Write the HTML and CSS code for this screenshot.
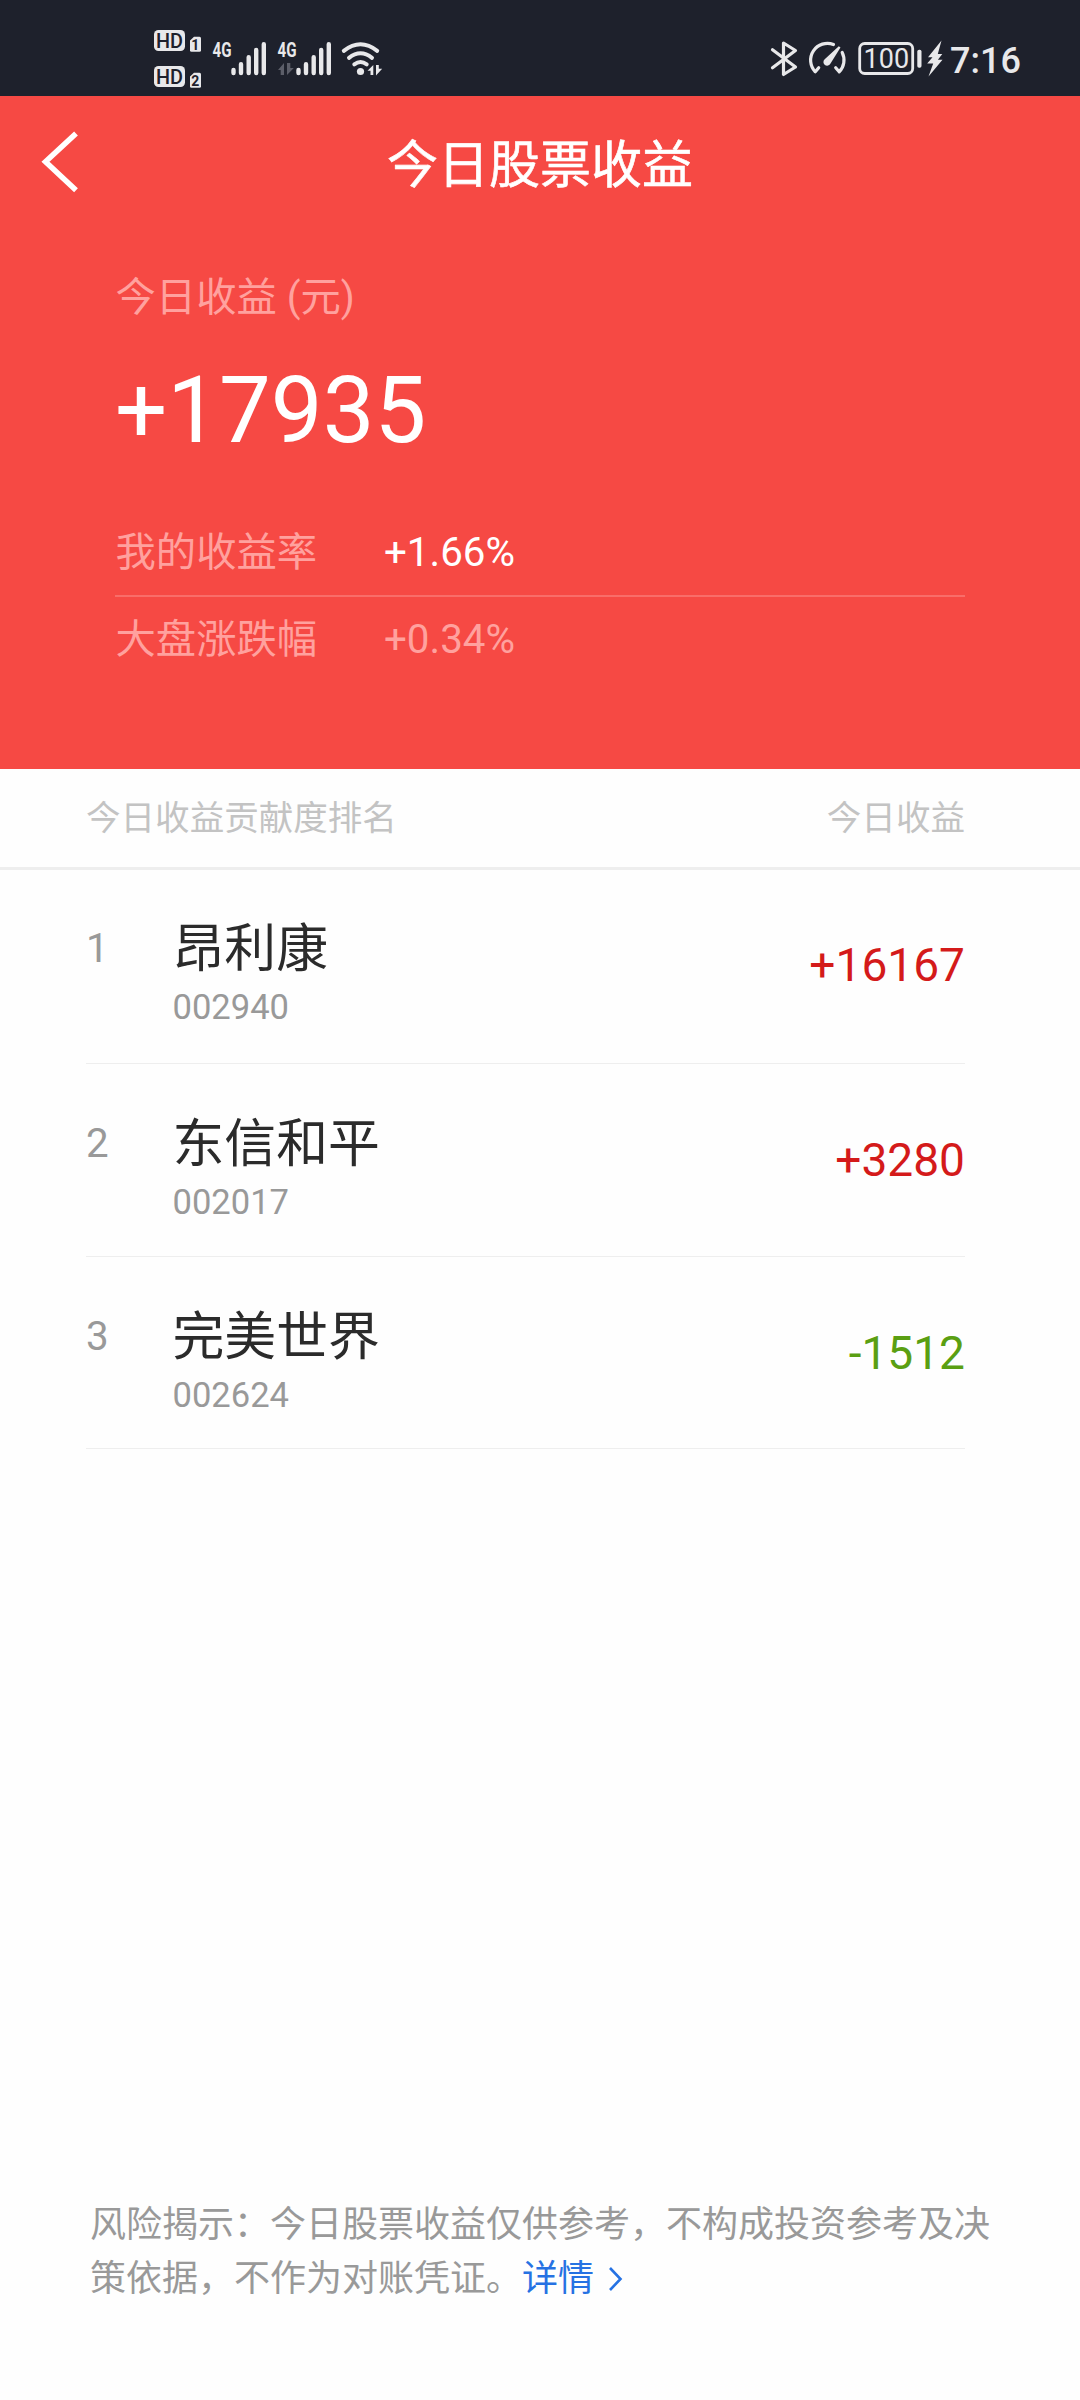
FILE: index.html
```html
<!DOCTYPE html>
<html lang="zh-CN">
<head>
<meta charset="utf-8">
<title>今日股票收益</title>
<link rel="stylesheet" href="styles.css">
</head>
<body>
<div class="screen">
  <header class="status">
    <div class="status-group">
      <svg class="icon" width="56" height="96" viewBox="150 0 56 96">
        <rect x="154" y="30" width="31" height="21" rx="4.5"/>
        <rect x="154" y="66" width="31" height="21" rx="4.5"/>
        <text class="hd" x="156" y="47.7" textLength="27" lengthAdjust="spacingAndGlyphs">HD</text>
        <text class="hd" x="156" y="83.7" textLength="27" lengthAdjust="spacingAndGlyphs">HD</text>
        <path d="M190 40.5l4-3.8h5.5q1.5 0 1.5 1.5v12q0 1.5-1.5 1.5h-8q-1.5 0-1.5-1.5z"/>
        <path d="M190 76.5l4-3.8h5.5q1.5 0 1.5 1.5v12q0 1.5-1.5 1.5h-8q-1.5 0-1.5-1.5z"/>
        <text class="sim" x="195.3" y="49.7">1</text>
        <text class="sim" x="195.3" y="85.7">2</text>
      </svg>
      <svg class="icon" width="65" height="96" viewBox="206 0 65 96">
        <text class="net" x="212.5" y="56.7" textLength="19" lengthAdjust="spacingAndGlyphs">4G</text>
        <path class="bars" d="M233.5 70v3M241 64.3v8.7M248.7 57.3V73M256.2 50V73M263.8 44.2V73"/>
      </svg>
      <svg class="icon" width="66" height="96" viewBox="271 0 66 96">
        <text class="net" x="277.5" y="56.7" textLength="19" lengthAdjust="spacingAndGlyphs">4G</text>
        <path class="bars" d="M298.5 70v3M306 64.3v8.7M313.7 57.3V73M321.2 50V73M328.8 44.2V73"/>
        <path class="muted" d="M278 70l6-7v12h-3.3v-5zM287 63h3.3v5h3.5L287 75z"/>
      </svg>
      <svg class="icon" width="50" height="96" viewBox="337 0 50 96">
        <path class="wave" d="M343.8 50.8Q360.5 37.8 377.2 50.8M349 57.8Q360.5 48.8 372 57.8M354.3 64.3Q360.5 59.8 366.7 64.3"/>
        <circle cx="360.5" cy="71.5" r="3.6"/>
        <path d="M367.5 70.8L373.3 65v10h-2.8v-4.2zM376 65h2.8v3.8h3.4L376 75.5z"/>
      </svg>
    </div>
    <div class="status-group">
      <svg class="icon" width="36" height="96" viewBox="767 0 36 96">
        <path class="line" d="M772.5 49.7L795.5 67 783.5 74.5V43L795.5 50.5 772.5 67.8"/>
      </svg>
      <svg class="icon" width="49" height="96" viewBox="803 0 49 96">
        <path class="line" d="M818.7 67.8L815.3 71.8A16.8 16.8 0 0 1 833.5 44.5M842.2 52.5A16.8 16.8 0 0 1 839.2 71.8L835.7 67.8"/>
        <path d="M838.8 46.2l1.7 1.2L830.5 63.5a3.7 3.7 0 1 1-5.8-4.3z"/>
      </svg>
      <svg class="icon" width="73" height="96" viewBox="852 0 73 96">
        <rect class="shell" x="859.7" y="43.5" width="53" height="30" rx="5"/>
        <rect x="917.3" y="49.8" width="4.2" height="18" rx="1.8"/>
        <text class="level" x="886.3" y="68.3">100</text>
      </svg>
      <svg class="icon" width="25" height="96" viewBox="925 0 25 96">
        <path d="M941.5 40.5L928 57.3h4.5L927.2 63.5h6L928.5 76.5 942.5 59.8h-4.6L942.3 54h-4.5z"/>
      </svg>
      <time class="clock">7:16</time>
    </div>
  </header>

  <section class="hero">
    <nav class="navbar">
      <svg class="back" width="44" height="64" viewBox="0 0 44 64"><path d="M38 3.5L7.5 31.8 38 60.2"/></svg>
      <h1 class="title">今日股票收益</h1>
    </nav>
    <div class="summary">
      <p class="caption">今日收益 (元)</p>
      <p class="total">+17935</p>
      <dl class="rates">
        <div class="rate rate-own"><dt>我的收益率</dt><dd>+1.66%</dd></div>
        <div class="rate"><dt>大盘涨跌幅</dt><dd>+0.34%</dd></div>
      </dl>
    </div>
  </section>

  <main class="ranking">
    <div class="list-head"><span>今日收益贡献度排名</span><span>今日收益</span></div>
    <ol class="list">
      <li class="row">
        <span class="rank">1</span>
        <div class="stock"><span class="name">昂利康</span><span class="code">002940</span></div>
        <span class="amount up">+16167</span>
      </li>
      <li class="row">
        <span class="rank">2</span>
        <div class="stock"><span class="name">东信和平</span><span class="code">002017</span></div>
        <span class="amount up">+3280</span>
      </li>
      <li class="row">
        <span class="rank">3</span>
        <div class="stock"><span class="name">完美世界</span><span class="code">002624</span></div>
        <span class="amount down">-1512</span>
      </li>
    </ol>
  </main>

  <footer class="notice">风险揭示：今日股票收益仅供参考，不构成投资参考及决策依据，不作为对账凭证。<a class="more">详情<svg class="more-icon" width="16" height="26" viewBox="0 0 16 26"><path d="M2 2l10.5 11L2 24"/></svg></a></footer>
</div>
</body>
</html>
```
FILE: styles.css
```css
* {
  box-sizing: border-box;
  margin: 0;
  padding: 0;
}

body {
  font-family: Roboto, "Noto Sans CJK SC", sans-serif;
  background: #fefefe;
}

.screen {
  display: flex;
  flex-direction: column;
  width: 1080px;
  height: 2400px;
}

/* Status bar */
.status {
  display: flex;
  justify-content: space-between;
  height: 96px;
  padding: 0 61px 0 150px;
  background: #1e212c;
  color: #e8e8ea;
}

.status-group {
  display: flex;
}

.icon {
  display: block;
  fill: #e8e8ea;
}

.hd {
  font-size: 20.5px;
  font-weight: 500;
  fill: #1e212c;
}

.sim {
  font-size: 14px;
  font-weight: 700;
  text-anchor: middle;
  fill: #1e212c;
}

.net {
  font-size: 19.5px;
  font-weight: 700;
}

.bars {
  fill: none;
  stroke: #e8e8ea;
  stroke-width: 4.4;
  stroke-linecap: round;
}

.muted {
  fill: #5c5e69;
}

.wave {
  fill: none;
  stroke: #e8e8ea;
  stroke-width: 4;
  stroke-linecap: round;
}

.line {
  fill: none;
  stroke: #e8e8ea;
  stroke-width: 3.2;
  stroke-linecap: round;
  stroke-linejoin: round;
}

.shell {
  fill: none;
  stroke: #e8e8ea;
  stroke-width: 2.8;
}

.level {
  font-size: 27px;
  text-anchor: middle;
}

.clock {
  width: 69px;
  height: 96px;
  padding-top: 12px;
  font-size: 36px;
  font-weight: 500;
  line-height: 98px;
  text-align: right;
}

/* Red summary area */
.hero {
  height: 673px;
  background: #f64944;
  color: #fff;
}

.navbar {
  display: grid;
  grid-template-columns: 120px 1fr 120px;
  align-items: center;
  height: 138px;
}

.back {
  margin: -6px 0 0 38px;
  fill: none;
  stroke: #fff;
  stroke-width: 5.5;
}

.title {
  padding-top: 2px;
  font-size: 51px;
  font-weight: 400;
  line-height: 60px;
  text-align: center;
  -webkit-text-stroke: 0.6px #fff;
}

.summary {
  padding: 34px 115px 0;
}

.caption {
  padding-left: 0.5px;
  font-size: 40.32px;
  line-height: 60px;
  color: #ffa19e;
}

.total {
  padding-top: 33px;
  font-size: 92.16px;
  line-height: 100px;
}

.rates {
  padding-top: 47px;
}

.rate {
  display: grid;
  grid-template-columns: 269px 1fr;
  padding-top: 13px;
  font-size: 40.32px;
  line-height: 60px;
  color: #ffa19e;
}

.rate-own {
  height: 89px;
  padding-top: 15px;
  border-bottom: 2px solid #f96d69;
}

.rate dt {
  padding-left: 0.5px;
}

.rate-own dd {
  color: #fff;
}

/* Ranking */
.list-head {
  display: flex;
  justify-content: space-between;
  height: 101px;
  padding: 0 115px 0 86px;
  border-bottom: 3px solid #eee;
  font-size: 34.56px;
  line-height: 98px;
  color: #c3c3c3;
}

.list {
  padding: 0 115px 0 86px;
  list-style: none;
}

.row {
  display: grid;
  grid-template-columns: 86.5px 1fr auto;
  height: 193px;
  padding-top: 49px;
  border-bottom: 1px solid #eee;
}

.row:first-child {
  height: 194px;
  padding-top: 48px;
}

.row:last-child {
  height: 192px;
}

.rank {
  padding-top: 1px;
  font-size: 40.32px;
  line-height: 60px;
  color: #999;
}

.stock {
  display: flex;
  flex-direction: column;
  padding-top: 2px;
}

.name {
  font-size: 51.84px;
  line-height: 60px;
  color: #2b2b2b;
}

.code {
  font-size: 34.56px;
  line-height: 54px;
  color: #999;
}

.amount {
  padding-top: 17px;
  font-size: 46.08px;
  line-height: 60px;
}

.up {
  color: #d41a1a;
}

.down {
  color: #5a9f12;
}

/* Risk notice */
.notice {
  width: 902px;
  margin: auto 0 94px 90px;
  font-size: 36px;
  line-height: 54px;
  color: #999;
}

.more {
  color: #2672e3;
}

.more-icon {
  margin-left: 14px;
  vertical-align: -1px;
  fill: none;
  stroke: #2672e3;
  stroke-width: 2.6;
}
```
